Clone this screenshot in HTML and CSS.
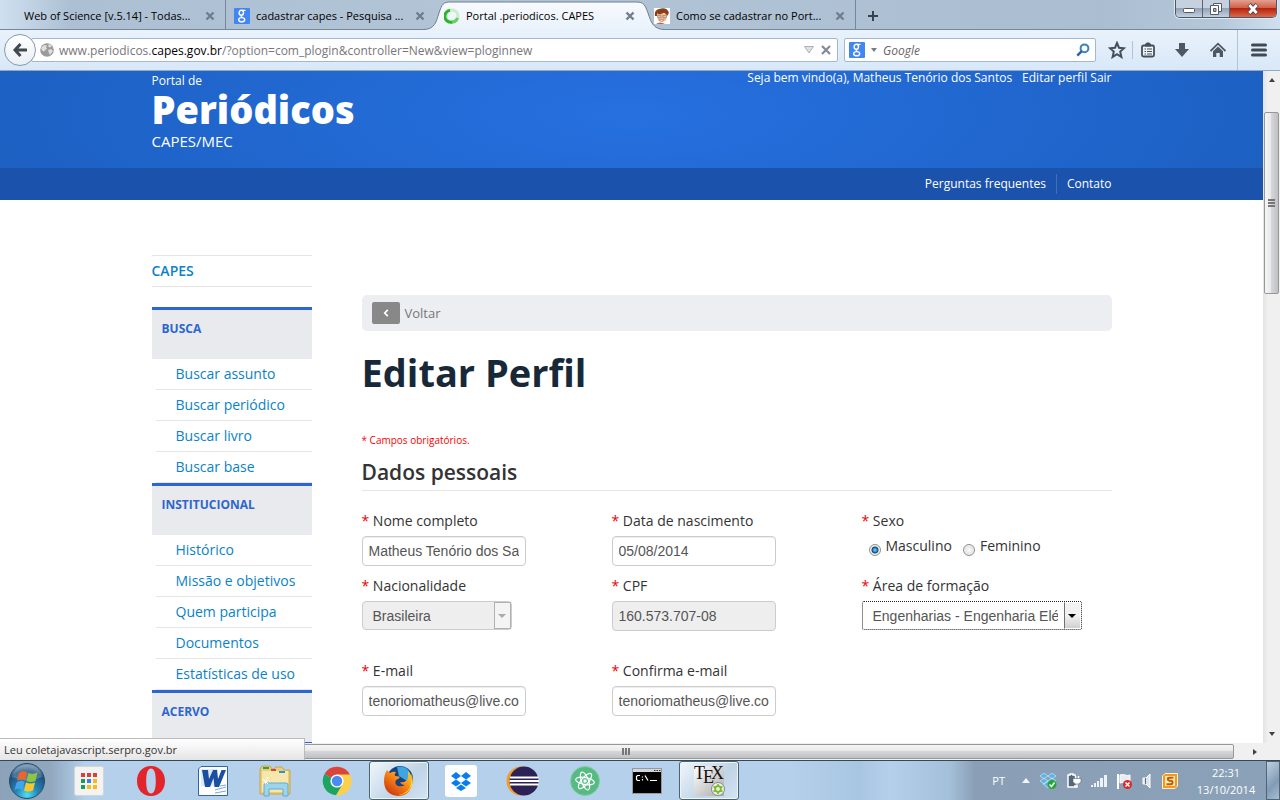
FILE: index.html
```html
<!DOCTYPE html>
<html lang="pt-BR">
<head>
<meta charset="utf-8">
<title>Portal .periodicos. CAPES</title>
<link rel="stylesheet" href="styles.css">
</head>
<body>
<div class="tabbar">
  <div class="tab"><span class="tab-title">Web of Science [v.5.14] - Todas...</span><button class="tab-close" aria-label="Fechar aba"><svg width="10" height="10" viewBox="0 0 10 10"><path d="M1.5 1.5l7 7M8.500 1.500l-7 7"/></svg></button></div>
  <div class="tab tab-second"><svg class="favicon" width="16" height="16" viewBox="0 0 16 16"><use href="#g-logo"/></svg><span class="tab-title">cadastrar capes - Pesquisa ...</span><button class="tab-close" aria-label="Fechar aba"><svg width="10" height="10" viewBox="0 0 10 10"><path d="M1.5 1.5l7 7M8.500 1.500l-7 7"/></svg></button></div>
  <div class="tab tab-active">
    <svg class="tab-shape" width="240" height="30" viewBox="0 0 240 30"><defs><linearGradient id="tabFill" x2="0" y2="1"><stop stop-color="#f8fafd"/><stop offset="1" stop-color="#e9f2fb"/></linearGradient></defs><path d="M0 30V29.500C11 29 12 22 15 13C18 4 19 2 27 2H212C220 2 221 5 224 13C227 22 229 29 240 29.500V30Z" fill="url(#tabFill)"/><path d="M0 29.500C11 29 12 22 15 13C18 4 19 2 27 2H212C220 2 221 5 224 13C227 22 229 29 240 29.500" fill="none" stroke="#6e8191"/></svg>
    <svg class="favicon" width="16" height="16" viewBox="0 0 16 16"><circle cx="8" cy="8" r="6" fill="none" stroke="#c9ecc9" stroke-width="3"/><path d="M8.500 14A6 6 0 1 1 6 2.300" fill="none" stroke="#2bb52b" stroke-width="3"/><path d="M8 14A6 6 0 0 0 13.500 10" fill="none" stroke="#62cf62" stroke-width="3"/></svg>
    <span class="tab-title">Portal .periodicos. CAPES</span><button class="tab-close" aria-label="Fechar aba"><svg width="10" height="10" viewBox="0 0 10 10"><path d="M1.5 1.5l7 7M8.500 1.500l-7 7"/></svg></button>
  </div>
  <div class="tab tab-last"><svg class="favicon" width="16" height="16" viewBox="0 0 16 16"><path fill="#fff" d="M0 0h16v16H0z"/><path d="M3 6h10l-1 6q-4 4-8 0z" fill="#edb68c"/><path d="M1 8Q0 2 5 1Q12-1 14 3Q16 5 13 8Q13 6 10 5Q6 7 3 5.500V8Z" fill="#8b3f17"/><path d="M3.500 7.500h3.500v2.300H3.500zM9 7.500h3.500v2.300H9z" fill="#d9bfae" stroke="#8d736a" stroke-width=".5"/><path d="M5 12h5q-2 3-5 0" fill="#fff" stroke="#a55a3d" stroke-width=".5"/><path d="M2 16q4-3 9 0" fill="#b86a44"/></svg><span class="tab-title">Como se cadastrar no Port...</span><button class="tab-close" aria-label="Fechar aba"><svg width="10" height="10" viewBox="0 0 10 10"><path d="M1.5 1.5l7 7M8.500 1.500l-7 7"/></svg></button></div>
  <button class="tab-new" aria-label="Nova aba"><svg width="12" height="12" viewBox="0 0 12 12"><path d="M6 1v10M1 6h10" stroke="#36424c" stroke-width="2"/></svg></button>
  <div class="win-buttons">
    <button class="win-min" aria-label="Minimizar"><svg width="14" height="14" viewBox="0 0 14 14"><rect x="1.500" y="6.500" width="11" height="4" rx="1" fill="#fff" stroke="#535a66"/></svg></button>
    <button class="win-max" aria-label="Restaurar"><svg width="14" height="14" viewBox="0 0 14 14"><path d="M4.500 1.500h8v8h-8z" fill="#fff" stroke="#535a66"/><path d="M1.500 3.500h8v9h-8z" fill="#fff" stroke="#535a66"/><path d="M4.500 6.500h2.500v3H4.500z" fill="#aab5c6" stroke="#535a66"/></svg></button>
    <button class="win-close" aria-label="Fechar"><svg width="14" height="12" viewBox="0 0 14 12"><path d="M3 1.500l8 9M11 1.500l-8 9" stroke="#54454a" stroke-width="4.500"/><path d="M3.300 2l7.400 8M10.700 2l-7.400 8" stroke="#fff" stroke-width="2.800"/></svg></button>
  </div>
</div>

<div class="toolbar">
  <button class="back" aria-label="Voltar"><svg width="16" height="16" viewBox="0 0 16 16"><path d="M8.500 2L3 8l5.500 6M3 8h12" fill="none" stroke="#41494f" stroke-width="3"/></svg></button>
  <div class="urlbar">
    <svg width="14" height="14" viewBox="0 0 14 14"><circle cx="7" cy="7" r="6.800" fill="#9b9b9b"/><path d="M1 5l3-3 3 .5-1 2 1 1-3 3-2-1zM8 7l3-1 2 2-3 4-1-2zM9 1l3 2-2 1.500-2-1z" fill="#dedede"/></svg>
    <div class="url" role="textbox" aria-label="Endereço">www.periodicos.<span class="domain">capes.gov.br</span>/?option=com_plogin&amp;controller=New&amp;view=ploginnew</div>
    <svg width="10" height="8" viewBox="0 0 10 8"><path d="M.5.5h9L5 7z" fill="#dde2e6" stroke="#a9b0b6"/></svg>
    <button class="stop" aria-label="Parar"><svg width="10" height="10" viewBox="0 0 10 10"><path d="M1 1l8 8M9 1l-8 8" stroke="#7f8b96" stroke-width="2.200"/></svg></button>
  </div>
  <div class="searchbar">
    <svg width="16" height="16" viewBox="0 0 16 16"><g id="g-logo"><rect width="16" height="16" rx="1" fill="#4285f4"/><g fill="none" stroke="#fff"><ellipse cx="7.300" cy="4.800" rx="2.200" ry="2.500" stroke-width="1.400"/><path d="M7.500 2.300h4M8 7.300q-2 1 .5 2.200" stroke-width="1.200"/><ellipse cx="7.700" cy="11.700" rx="3" ry="2.100" stroke-width="1.400"/></g></g></svg>
    <svg width="6" height="4" viewBox="0 0 6 4"><path d="M0 0h6L3 4z" fill="#747b82"/></svg>
    <input class="search" type="text" placeholder="Google" aria-label="Pesquisar">
    <svg width="14" height="14" viewBox="0 0 14 14"><circle cx="8.500" cy="5.300" r="3.900" fill="none" stroke="#3c82bd" stroke-width="2"/><path d="M5.700 8.200L1.300 12.600" stroke="#2964a4" stroke-width="2.500"/></svg>
  </div>
  <div class="tools">
    <button class="tool tool-star" aria-label="Favoritar"><svg width="18" height="18" viewBox="0 0 18 18"><path d="M9 2l2 4.700 5 .5-3.800 3.400L13.400 16 9 13.200 4.600 16l1.200-5.400L2 7.200l5-.5z" fill="none" stroke="#454f59" stroke-width="2"/></svg></button>
    <span class="tool-sep"></span>
    <button class="tool tool-list" aria-label="Favoritos"><svg width="16" height="16" viewBox="0 0 16 16"><rect x="2" y="3.500" width="12" height="11" rx="1.500" fill="#eef4fa" stroke="#454f59" stroke-width="1.800"/><path d="M5 4.500V2l2-1.500h2L11 2v2.500z" fill="#454f59"/><path d="M4.500 7h1.500M7 7h5M4.500 9.500h1.500M7 9.500h5M4.500 12h1.500M7 12h5" stroke="#454f59" stroke-width="1.200"/></svg></button>
    <button class="tool tool-down" aria-label="Downloads"><svg width="16" height="16" viewBox="0 0 16 16"><path d="M5 1h6v6h4l-7 8-7-8h4z" fill="#4d5863"/></svg></button>
    <button class="tool tool-home" aria-label="Página inicial"><svg width="16" height="16" viewBox="0 0 16 16"><path d="M.5 9L8 1.700 15.500 9" fill="none" stroke="#4d5863" stroke-width="1.800"/><path d="M3 9.200L8 4.600l5 4.600V15H9.700v-4H6.300v4H3z" fill="#4d5863"/></svg></button>
    <button class="tool tool-menu" aria-label="Abrir menu"><svg width="16" height="14" viewBox="0 0 16 14"><path d="M1.500 2h13M1.500 7h13M1.500 12h13" stroke="#404a54" stroke-width="3" stroke-linecap="round"/></svg></button>
  </div>
</div>

<div class="window">
  <div class="page">
    <header class="site-header">
      <div class="wrap header-row">
        <div class="brand"><span class="brand-top">Portal de</span><span class="brand-name">Periódicos</span><span class="brand-sub">CAPES/MEC</span></div>
        <div class="user"><span>Seja bem vindo(a), Matheus Tenório dos Santos</span><span class="user-links"><a href="#">Editar perfil</a> <a href="#">Sair</a></span></div>
      </div>
    </header>
    <nav class="site-nav"><div class="wrap nav-row"><a href="#">Perguntas frequentes</a><a class="nav-last" href="#">Contato</a></div></nav>
    <div class="wrap content">
      <aside class="sidebar">
        <a class="capes" href="#">CAPES</a>
        <h2>BUSCA</h2>
        <ul><li><a href="#">Buscar assunto</a></li><li><a href="#">Buscar periódico</a></li><li><a href="#">Buscar livro</a></li><li><a href="#">Buscar base</a></li></ul>
        <h2>INSTITUCIONAL</h2>
        <ul><li><a href="#">Histórico</a></li><li><a href="#">Missão e objetivos</a></li><li><a href="#">Quem participa</a></li><li><a href="#">Documentos</a></li><li><a href="#">Estatísticas de uso</a></li></ul>
        <h2 class="side-end">ACERVO</h2>
      </aside>
      <main class="main">
        <a class="voltar" href="#"><span class="voltar-icon"><svg width="6" height="8" viewBox="0 0 6 8"><path d="M4.800.8L1.700 4l3.100 3.200" fill="none" stroke="#fff" stroke-width="1.700"/></svg></span>Voltar</a>
        <h1>Editar Perfil</h1>
        <p class="note">* Campos obrigatórios.</p>
        <h3>Dados pessoais</h3>
        <form class="fields">
          <div class="field"><label for="nome"><b>*</b> Nome completo</label><input id="nome" type="text" value="Matheus Tenório dos Santos"></div>
          <div class="field"><label for="nasc"><b>*</b> Data de nascimento</label><input id="nasc" type="text" value="05/08/2014"></div>
          <fieldset class="field"><legend><b>*</b> Sexo</legend>
            <div class="radios"><input type="radio" name="sexo" id="masc" checked><label for="masc">Masculino</label><input type="radio" name="sexo" id="fem"><label for="fem">Feminino</label></div></fieldset>
          <div class="field"><label for="nac"><b>*</b> Nacionalidade</label><span class="select select-off"><select id="nac" disabled><option>Brasileira</option></select><span class="drop"></span></span></div>
          <div class="field"><label for="cpf"><b>*</b> CPF</label><input id="cpf" type="text" value="160.573.707-08" disabled></div>
          <div class="field"><label for="area"><b>*</b> Área de formação</label><span class="select select-focus"><select id="area"><option>Engenharias - Engenharia Elétrica</option></select><span class="drop"></span></span></div>
          <div class="field field-mail"><label for="mail"><b>*</b> E-mail</label><input id="mail" type="text" value="tenoriomatheus@live.com"></div>
          <div class="field field-mail"><label for="mail2"><b>*</b> Confirma e-mail</label><input id="mail2" type="text" value="tenoriomatheus@live.com"></div>
        </form>
      </main>
    </div>
  </div>
  <div class="vscroll"><svg width="6" height="4" viewBox="0 0 6 4"><path d="M3 0l3 4H0z" fill="#404040"/></svg><div class="vthumb"><i></i><i></i><i></i></div><svg class="vdown" width="6" height="4" viewBox="0 0 6 4"><path d="M0 0h6L3 4z" fill="#404040"/></svg></div>
</div>
<div class="hscroll"><div class="hthumb"><i></i><i></i><i></i></div><svg width="4" height="6" viewBox="0 0 4 6"><path d="M0 0l4 3-4 3z" fill="#404040"/></svg><div class="status">Leu coletajavascript.serpro.gov.br</div></div>

<div class="taskbar">
  <button class="start" aria-label="Iniciar"><svg width="38" height="38" viewBox="0 0 38 38"><defs><radialGradient id="orb" cx=".5" cy=".9" r=".9"><stop stop-color="#4fe0f5"/><stop offset=".35" stop-color="#2487b8"/><stop offset=".75" stop-color="#1f4f7d"/><stop offset="1" stop-color="#7fa2bd"/></radialGradient></defs><circle cx="19" cy="19" r="17.500" fill="url(#orb)" stroke="#284a68"/><path d="M4 15Q19 22 34 15Q31 3 19 3T4 15" fill="#fff" opacity=".2"/><path d="M11 11q4-3 8-.5l-2 8q-4-2.500-8 .5z" fill="#f0642c"/><path d="M20.500 11q4 2 9-.5l-2 8.500q-4.500 2-9 0z" fill="#8fc63f"/><path d="M8.500 20.500q4-3 8-.5l-2 8q-4-2.500-8 0z" fill="#42a5e8"/><path d="M18 20.500q4.500 2 9 0l-2 8q-4.500 2-9 0z" fill="#fcc728"/></svg></button>
  <button class="task" aria-label="Aplicativos"><svg width="30" height="30" viewBox="0 0 30 30"><rect x=".5" y=".5" width="29" height="29" rx="2" fill="#f3f3f3" stroke="#d5d5d5"/><path fill="#e33b35" d="M7 7h4v4H7zM13 7h4v4h-4zM19 7h4v4h-4z"/><path fill="#179b59" d="M7 13h4v4H7zM7 19h4v4H7z"/><path fill="#2f82f0" d="M13 13h4v4h-4z"/><path fill="#fbb912" d="M19 13h4v4h-4zM13 19h4v4h-4zM19 19h4v4h-4z"/></svg></button>
  <button class="task" aria-label="Opera"><svg width="30" height="32" viewBox="0 0 30 32"><path fill-rule="evenodd" d="M15 1C6 1 1 8 1 16s5 15 14 15 14-7 14-15S24 1 15 1zm0 2.500c3.500 0 4.800 5 4.800 12.500s-1.300 12.500-4.800 12.500-4.800-5-4.800-12.500S11.500 3.500 15 3.500z" fill="#e2252b"/></svg></button>
  <button class="task" aria-label="Word"><svg width="30" height="30" viewBox="0 0 30 30"><path d="M3 .5h26.500v29H.5V3z" fill="#fff" stroke="#2d65a8"/><path d="M3 3h17v17H3z" fill="#dceafb"/><path d="M4 4h6l1 9 4-9h4l1 9 3.500-9H28l-7 17h-4.500L15.500 12 12 21H7z" fill="#1b50a0"/><path d="M17 24l11-3M17 27l11-2M22 20l6-1" stroke="#7ba5d8"/></svg></button>
  <button class="task" aria-label="Explorador"><svg width="34" height="32" viewBox="0 0 34 32"><path d="M2 4l2-3h8l2 3h2l2-2h6l2 3h6v24H2z" fill="#e9cd79" stroke="#c5a550"/><path d="M4 6h26v21H4z" fill="#f7e7ac"/><path d="M5 3h6" stroke="#29a745" stroke-width="2"/><path d="M13 5h5" stroke="#d44a2a" stroke-width="2"/><path d="M21 7h6" stroke="#318ed1" stroke-width="2"/><path d="M6 31V20q0-2 2-2h20q2 0 2 2v11h-5v-7H11v7z" fill="#9bd4ed" stroke="#65abd0"/><path d="M5 14l5 5M10 12l-3 7" stroke="#fff"/></svg></button>
  <button class="task" aria-label="Chrome"><svg width="30" height="30" viewBox="0 0 30 30"><path d="M15 15L2.500 8A14.300 14.300 0 0 1 28 9z" fill="#dc4437"/><path d="M15 15V8.500H28A14.300 14.300 0 0 1 14 29.300z" fill="#fdd04b"/><path d="M15 15l5.500 3.300L14 29.300A14.300 14.300 0 0 1 2.500 8z" fill="#1da462"/><circle cx="15" cy="15" r="6.600" fill="#fff"/><circle cx="15" cy="15" r="5.200" fill="#4a8af4"/></svg></button>
  <button class="task task-on" aria-label="Firefox"><svg width="32" height="32" viewBox="0 0 32 32"><defs><linearGradient id="fox" x1="1" x2=".2" y2="1"><stop stop-color="#ffe13a"/><stop offset=".45" stop-color="#fb8d18"/><stop offset="1" stop-color="#c8330b"/></linearGradient></defs><circle cx="17" cy="14" r="13" fill="#17417f"/><path d="M14 2q9-2 13 6l-3 8-8-5z" fill="#3fa5de"/><path d="M4 5l3 3q3-2 6-1-2 2-1 4 3 0 5 1-1 2-4 3-2 4 2 6 4 1 7-1-4 0-5-3 4 1 7-2 2-4 1-9 5 5 4 13-2 12-14 12Q2 30 1 17 1 9 4 5" fill="url(#fox)"/><path d="M28 8q4 9-1 16-4 6-12 6 12-2 13-12 1-6 0-10" fill="#ffd629"/></svg></button>
  <button class="task" aria-label="Dropbox"><svg width="32" height="32" viewBox="0 0 32 32"><rect width="32" height="32" rx="3" fill="#fff"/><path d="M11 7l5 4-5 3.500L6 11zM21 7l5 4-5 3.500L16 11zM11 14.500l5 3.500-5 3.500L6 18zM21 14.500l5 3.500-5 3.500-5-3.500zM16 19.500l5 3.500-5 3-5-3z" fill="#087df0"/></svg></button>
  <button class="task" aria-label="Eclipse"><svg width="34" height="30" viewBox="0 0 34 30"><circle cx="15" cy="15" r="14.500" fill="#f39a2c"/><circle cx="18" cy="15" r="14.500" fill="#2c2255"/><path d="M4 11.500h28.500M3.500 15h29.500M4 18.500h28.500" stroke="#fff" stroke-width="1.800"/></svg></button>
  <button class="task" aria-label="Atom"><svg width="30" height="30" viewBox="0 0 30 30"><circle cx="15" cy="15" r="14.500" fill="#55bb83" stroke="#84cda5"/><g fill="none" stroke="#fff" stroke-width="1.200"><ellipse cx="15" cy="15" rx="3.500" ry="9.500" transform="rotate(-20 15 15)"/><ellipse cx="15" cy="15" rx="3.500" ry="9.500" transform="rotate(40 15 15)"/><ellipse cx="15" cy="15" rx="3.500" ry="9.500" transform="rotate(100 15 15)"/></g><circle cx="15" cy="15" r="1.700" fill="#fff"/></svg></button>
  <button class="task" aria-label="Prompt"><svg width="30" height="26" viewBox="0 0 30 26"><path d="M.5.5h29v25H.5z" fill="#000" stroke="#999"/><path d="M1 1h28v3H1z" fill="#cfd6de"/><path d="M22 2.500h1.500M24.500 2.500H26M27 2.500h1.500" stroke="#333"/><path d="M8 7.500H5.500L4.500 8.500v3l1 1H8M10.500 8.500v1M10.500 11v1.500M13 7.500l3 5M18 12.500h7" fill="none" stroke="#fff" stroke-width="1.200"/></svg></button>
  <button class="task task-on" aria-label="TeX"><svg width="32" height="32" viewBox="0 0 32 32"><defs><linearGradient id="tex" x2="1" y2="1"><stop stop-color="#fff"/><stop offset="1" stop-color="#aaa"/></linearGradient></defs><path d="M1 1h30v30H1z" fill="url(#tex)"/><g class="tex-text"><text x="1" y="14">T</text><text x="10" y="18">E</text><text x="18" y="14">X</text></g><circle cx="25" cy="24" r="6.500" fill="#eee" stroke="#888"/><circle cx="25" cy="24" r="2.800" fill="none" stroke="#75bd22" stroke-width="1.800"/><path d="M25 19v2M25 27v2M20.500 21.500l2 1M29.500 21.500l-2 1M20.500 26.500l2-1M29.500 26.500l-2-1" stroke="#75bd22" stroke-width="1.600"/></svg></button>
  <div class="tray">
    <span class="lang">PT</span>
    <svg width="8" height="5" viewBox="0 0 8 5"><path d="M4 0l4 5H0z" fill="#f2f5f8"/></svg>
    <svg width="18" height="16" viewBox="0 0 18 16"><path d="M5 0l4 3-4 3-4-3zM13 0l4 3-4 3-4-3zM5 5l4 3-4 3-4-3zM13 5l4 3-4 3-4-3zM9 8l4 3-4 4-5-4z" fill="#5cb6ec" stroke="#d9effb" stroke-width=".6"/><circle cx="13" cy="11.500" r="4.500" fill="#29a33c"/><path d="M10.500 11.500l2 2 3-4" fill="none" stroke="#fff" stroke-width="1.500"/></svg>
    <svg width="16" height="16" viewBox="0 0 16 16"><path d="M9 3V2H7V1H4v1H2v12h7v-2" fill="#54667b" stroke="#fff" stroke-width="1.500"/><path d="M9.500 6V3M12.500 6V3M11 10v4H9" fill="none" stroke="#fff" stroke-width="1.500"/><path d="M7 5.500h8v3L13 11H9L7 8.500z" fill="#fff" stroke="#54667b" stroke-width=".6"/></svg>
    <svg width="16" height="14" viewBox="0 0 16 14"><path d="M0 11h2v2H0zM3 9h2v4H3zM6 7h2v6H6zM9 4h3v9H9zM13 1h3v12h-3z" fill="#eef2f6"/></svg>
    <svg width="16" height="16" viewBox="0 0 16 16"><path d="M2 1v15" stroke="#fff" stroke-width="2"/><path d="M4 2q3-1 5 0t5 0v8q-3 1-5 0t-5 0z" fill="#e8edf2" stroke="#fff"/><circle cx="11.500" cy="11.500" r="4.500" fill="#d52b2b"/><path d="M9.500 9.500l4 4M13.500 9.500l-4 4" stroke="#fff" stroke-width="1.500"/></svg>
    <svg width="12" height="16" viewBox="0 0 12 16"><path d="M2 5h3l4-4v14l-4-4H2z" fill="#dce3ea" stroke="#fff"/><path d="M4.500 5v6" stroke="#5f7085"/></svg>
    <svg width="16" height="16" viewBox="0 0 16 16"><path d="M3 .5h12.500V13l-2.500 2.500H.5V3z" fill="#f7971e" stroke="#fff0cb"/><path d="M3 3h10v10H3z" fill="#ffe8b8"/><path d="M10.500 5.500V4.700H7.500Q5.800 4.700 5.800 6t1.700 1.700h1.300q1.700 0 1.700 1.800t-1.700 1.800H5.500v-1" fill="none" stroke="#c45c00" stroke-width="2"/></svg>
    <div class="clock"><span>22:31</span><span>13/10/2014</span></div>
    <button class="desktop" aria-label="Mostrar área de trabalho"></button>
  </div>
</div>
</body>
</html>
```
FILE: styles.css
```css
* { box-sizing: border-box; }
html, body { height: 100%; }
body { margin: 0; display: flex; flex-direction: column; overflow: hidden; background: #fff; color: #333; font-family: "Open Sans", "Noto Sans", sans-serif; font-size: 14px; line-height: 20px; }
button { padding: 0; border: 0; background: none; font: inherit; display: grid; place-items: center; }
svg { display: block; flex: none; }
a { text-decoration: none; color: #0a82c8; }
h1, h2, h3, p, ul { margin: 0; padding: 0; list-style: none; }

.tabbar { height: 30px; flex: none; display: flex; align-items: stretch; padding-left: 16px; font-size: 11px; color: #000; background: linear-gradient(90deg, #cfe0f0, #adc0d3 70px, #b2c4d6 500px, #abbed1 1100px, #b5c8da 1220px, #cfdff0); border-bottom: 1px solid #74889a; }
.tab { position: relative; width: 210px; min-width: 0; display: flex; align-items: center; padding: 2px 10px 0 8px; border-right: 1px solid #74889a; }
.tab-second, .tab-active { border-right-color: transparent; }
.tab-shape { position: absolute; left: -12px; top: 0; }
.favicon { position: relative; margin-right: 6px; }
.tab-title { position: relative; flex: 1; min-width: 0; white-space: nowrap; overflow: hidden; }
.tab-close { position: relative; width: 10px; }
.tab-close path { stroke: #6e7e8d; stroke-width: 2.4; }
.tab-new { width: 34px; padding-top: 2px; }
.win-buttons { margin-left: auto; margin-right: 3px; height: 18px; display: flex; border: 1px solid #4c5868; border-top: 0; border-radius: 0 0 5px 5px; overflow: hidden; box-shadow: 0 0 0 1px #dfe8f1; }
.win-min, .win-max { width: 27px; background: linear-gradient(#c6d1df 45%, #94a3b7 50%, #c3d0df); border-right: 1px solid #5a6677; }
.win-close { width: 46px; background: linear-gradient(#e3a08f, #d2614a 45%, #b9230c 50%, #d9694c); }

.toolbar { height: 41px; flex: none; display: flex; align-items: center; background: linear-gradient(#e9f2fb, #d8e8f8); border-bottom: 1px solid #93a9bd; padding-left: 4px; }
.back { width: 32px; height: 32px; flex: none; border: 1px solid #8699ab; border-radius: 50%; background: linear-gradient(#fff, #e9eff5); z-index: 1; }
.urlbar, .searchbar { height: 24px; display: flex; align-items: center; background: #fff; border: 1px solid #a5b8cb; border-radius: 2px; }
.urlbar { flex: 1; min-width: 0; margin-left: -5px; padding: 0 6px 0 8px; gap: 5px; font-size: 12px; color: #777; }
.url { flex: 1; min-width: 0; padding-top: 1px; white-space: nowrap; overflow: hidden; }
.domain { color: #000; }
.stop { margin-left: 2px; }
.searchbar { width: 252px; margin-left: 6px; padding: 0 5px 0 4px; gap: 6px; }
.search { flex: 1; min-width: 0; border: 0; padding: 1px 0 0; background: none; font: italic 12px/16px "Open Sans", sans-serif; outline: 0; }
.search::placeholder { color: #666; opacity: 1; }
.tools { display: flex; align-self: stretch; align-items: center; margin-left: 6px; }
.tool { height: 40px; }
.tool-star { width: 30px; }
.tool-sep { width: 1px; height: 18px; background: #b2c3d4; }
.tool-list { width: 29px; }
.tool-down { width: 40px; }
.tool-home { width: 32px; margin-right: 3px; }
.tool-menu { width: 43px; border-left: 1px solid #b2c3d4; }

.window { flex: 1; min-height: 0; display: flex; }
.page { flex: 1; min-width: 0; overflow: hidden; }
.wrap { max-width: 960px; margin: 0 auto; }
.site-header { height: 97px; background: radial-gradient(ellipse 700px 200px at 50% 45%, #2670e0, #1c5fc0); }
.header-row { display: flex; justify-content: space-between; color: #fff; }
.header-row a, .nav-row a { color: #fff; }
.brand { display: flex; flex-direction: column; }
.brand-top { font-size: 12px; line-height: 20px; }
.brand-name { font-size: 38px; font-weight: 800; line-height: 36px; }
.brand-sub { font-size: 15px; line-height: 28px; }
.user { display: flex; gap: 10px; font-size: 12px; line-height: 14px; }
.site-nav { background: #1b52ac; height: 32px; }
.nav-row { display: flex; justify-content: flex-end; padding-top: 6px; font-size: 12px; }
.nav-last { margin-left: 10px; padding-left: 10px; border-left: 1px solid #3b70c4; }
.content { display: flex; gap: 50px; padding-top: 55px; }
.sidebar { width: 160px; flex: none; }
.capes { display: block; border: solid #e5e5e5; border-width: 1px 0; font-weight: 600; line-height: 30px; margin-bottom: 20px; }
.sidebar h2 { height: 52px; padding: 9px 10px; border-top: 3px solid #2c66ce; background: #e8eaee; color: #2c66ce; font-size: 12px; font-weight: 700; }
.sidebar .side-end { height: 55px; border-bottom: 3px solid #2c66ce; }
.sidebar li { margin-left: 4px; padding-left: 20px; line-height: 30px; border-bottom: 1px solid #e5e5e5; }
.main { flex: 1; min-width: 0; padding-top: 40px; }
.voltar { display: flex; align-items: center; gap: 5px; height: 36px; padding: 0 10px; border-radius: 5px; background: #edeef2; color: #777; font-size: 13px; }
.voltar-icon { width: 28px; height: 22px; border-radius: 2px; background: #888; display: grid; place-items: center; }
h1 { margin-top: 16px; font-size: 38px; line-height: 50px; font-weight: 700; color: #172938; }
.note { margin-top: 33px; font-size: 10px; color: #f00; }
h3 { padding-top: 4px; margin-bottom: 20px; border-bottom: 1px solid #e5e5e5; font-size: 21px; line-height: 36px; font-weight: 600; }

.fields { display: grid; grid-template-columns: repeat(3, 1fr); row-gap: 10px; }
.field { min-width: 0; margin: 0; padding: 0; border: 0; height: 55px; display: flex; flex-direction: column; align-items: flex-start; gap: 5px; }
.field b { color: #e00; font-weight: 400; }
.field-mail { margin-top: 20px; }
legend { padding: 0; }
.field input[type="text"] { width: 164px; height: 30px; padding: 4px 6px; border: 1px solid #ccc; border-radius: 4px; background: #fff; color: #555; font: 14px/20px "Liberation Sans", sans-serif; box-shadow: inset 0 1px 1px #eee; }
.field input:disabled { background: #eee; }
.radios { display: flex; align-items: center; padding: 5px 0 0 7px; }
.radios input { appearance: none; width: 12px; height: 12px; margin: 7px 5px 0 0; border: 1px solid #8e8f8f; border-radius: 50%; background: radial-gradient(#fff, #ccc); box-shadow: inset 0 0 0 1px #f4f4f4; }
.radios input:checked { background: radial-gradient(circle, #4fc3f0 0 1px, #0d4770 3px, #e8e8e8 4px); }
.radios label { margin-right: 11px; }
.select { position: relative; width: 150px; height: 29px; }
.select-focus { width: 220px; }
.select select { appearance: none; width: 100%; height: 100%; padding: 0 23px 0 10px; border: 1px solid #ccc; border-radius: 4px; background: #fff; color: #555; font: 14px/20px "Liberation Sans", sans-serif; opacity: 1; }
.select-off select { background: #eee; }
.select-focus select { border: 1px dotted #222; border-radius: 2px; }
.drop { position: absolute; top: 1px; right: 1px; bottom: 1px; width: 17px; display: grid; place-items: center; border: 1px solid #adb2b5; background: #f4f4f4; color: #aaa; pointer-events: none; }
.drop::after { content: ""; border: 4px solid transparent; border-top-color: currentColor; border-bottom: 0; }
.select-focus .drop { border: 1px solid #fff; border-left-color: #707070; background: linear-gradient(#f2f2f2 50%, #cfcfcf); color: #000; }

.vscroll { width: 17px; flex: none; display: flex; flex-direction: column; align-items: center; padding: 7px 0; background: linear-gradient(90deg, #e3e3e3, #f0f0f0 30%, #f0f0f0); }
.vthumb { width: 15px; height: 182px; margin-top: 30px; display: flex; flex-direction: column; gap: 1px; align-items: center; justify-content: center; border: 1px solid #979797; border-radius: 2px; background: linear-gradient(90deg, #f5f5f5, #e9e9eb 45%, #d5d6d9 50%, #bfc0c4); }
.vthumb i { width: 7px; height: 2px; background: #777; }
.vdown { margin-top: auto; }
.hscroll { position: relative; flex: none; height: 18px; display: flex; align-items: center; gap: 19px; padding-right: 23px; background: #f0f0f0; border-bottom: 1px solid #32495b; }
.hthumb { flex: 1; height: 15px; display: flex; gap: 1px; align-items: center; justify-content: center; padding-left: 17px; border: 1px solid #979797; border-radius: 2px; background: linear-gradient(#f5f5f5, #e9e9eb 45%, #d5d6d9 50%, #bfc0c4); }
.hthumb i { width: 2px; height: 7px; background: #777; }
.status { position: absolute; left: 0; bottom: 0; width: 305px; height: 22px; padding-left: 4px; border: solid #bbb; border-width: 1px 1px 0 0; background: linear-gradient(#fff, #e5e5e5); font-size: 11px; line-height: 22px; color: #333; }

.taskbar { height: 39px; flex: none; display: flex; background: linear-gradient(90deg, #8ba2b8, #90a7be 50px, #b5d0eb 85px, #b5d0eb 790px, #a8c6e2 860px, #b5d0eb 890px, #a4bfd9 950px, #8a9fb6 975px, #8ba1b8); }
.start { width: 54px; margin-right: 4px; }
.task { width: 62px; }
.task-on { width: 60px; margin: 0 1px; border: 1px solid #4c6275; border-radius: 3px; background: linear-gradient(135deg, #eff6fc, #bfd4e7 60%, #d4e4f2); box-shadow: inset 0 0 0 1px #edf5fb; }
.tex-text { font: 18px "Liberation Serif", serif; fill: #111; }
.tray { margin-left: auto; display: flex; align-items: center; gap: 9px; color: #fff; font-size: 11px; }
.lang { margin-right: 8px; }
.clock { width: 74px; margin-left: 2px; display: flex; flex-direction: column; align-items: center; line-height: 17px; }
.desktop { width: 14px; align-self: stretch; margin-left: -6px; border: 1px solid #506377; background: linear-gradient(135deg, #bdd0e2, #829bb4 60%, #a7bed4); }
```
